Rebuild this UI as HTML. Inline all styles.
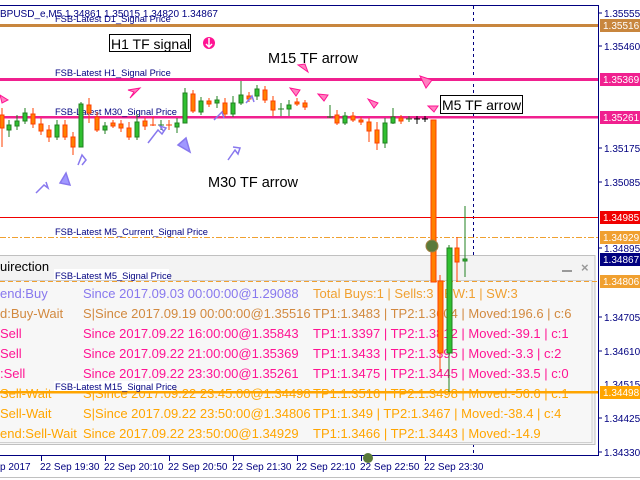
<!DOCTYPE html>
<html><head><meta charset="utf-8"><style>
html,body{margin:0;padding:0;background:#fff;width:640px;height:480px;overflow:hidden}
svg{display:block}
text{font-family:"Liberation Sans",sans-serif}
.ax{font-size:10px;fill:#000080}
.lb{font-size:9.3px;fill:#000080}
.pt{font-size:13px}
</style></head><body>
<svg width="640" height="480" viewBox="0 0 640 480" xmlns="http://www.w3.org/2000/svg">
<line x1="0" y1="5.5" x2="598" y2="5.5" stroke="#000080"/>
<line x1="598.5" y1="5" x2="598.5" y2="456" stroke="#000080"/>
<line x1="0" y1="455.5" x2="598" y2="455.5" stroke="#000080"/>
<line x1="473.5" y1="6" x2="473.5" y2="455" stroke="#000080" stroke-dasharray="3,3"/>

<rect x="-1" y="255.5" width="596" height="189" fill="#f3f3f3" stroke="#c0c0c0"/>
<rect x="-1" y="280.5" width="593" height="162" fill="#f7f7f7" stroke="#d0d0d0"/>
<text x="0" y="271" class="pt" fill="#000">uirection</text>
<line x1="562" y1="271" x2="572" y2="271" stroke="#999" stroke-width="2"/>
<text x="581" y="272" font-size="13" fill="#999" font-weight="bold">×</text>
<g class="pt" font-size="12.5">
<text x="0" y="298" fill="#8878ee">end:Buy</text>
<text x="83" y="298" fill="#8878ee">Since 2017.09.03 00:00:00@1.29088</text>
<text x="313" y="298" fill="#f0a030">Total Buys:1  | Sells:3  | BW:1  | SW:3</text>
<text x="0" y="318" fill="#d2893f">d:Buy-Wait</text>
<text x="83" y="318" fill="#d2893f">S|Since 2017.09.19 00:00:00@1.35516</text>
<text x="313" y="318" fill="#d2893f">TP1:1.3483 | TP2:1.3604 | Moved:196.6 | c:6</text>
<text x="0" y="338" fill="#ff1493">Sell</text>
<text x="83" y="338" fill="#ff1493">Since 2017.09.22 16:00:00@1.35843</text>
<text x="313" y="338" fill="#ff1493">TP1:1.3397 | TP2:1.3812 | Moved:-39.1 | c:1</text>
<text x="0" y="358" fill="#ff1493">Sell</text>
<text x="83" y="358" fill="#ff1493">Since 2017.09.22 21:00:00@1.35369</text>
<text x="313" y="358" fill="#ff1493">TP1:1.3433 | TP2:1.3395 | Moved:-3.3 | c:2</text>
<text x="0" y="378" fill="#ff1493">:Sell</text>
<text x="83" y="378" fill="#ff1493">Since 2017.09.22 23:30:00@1.35261</text>
<text x="313" y="378" fill="#ff1493">TP1:1.3475 | TP2:1.3445 | Moved:-33.5 | c:0</text>
<text x="0" y="398" fill="#ffa500">Sell-Wait</text>
<text x="83" y="398" fill="#ffa500">S|Since 2017.09.22 23:45:00@1.34498</text>
<text x="313" y="398" fill="#ffa500">TP1:1.3516 | TP2:1.3498 | Moved:-56.6 | c:1</text>
<text x="0" y="418" fill="#ffa500">Sell-Wait</text>
<text x="83" y="418" fill="#ffa500">S|Since 2017.09.22 23:50:00@1.34806</text>
<text x="313" y="418" fill="#ffa500">TP1:1.349 | TP2:1.3467 | Moved:-38.4 | c:4</text>
<text x="0" y="438" fill="#ffa500">end:Sell-Wait</text>
<text x="83" y="438" fill="#ffa500">Since 2017.09.22 23:50:00@1.34929</text>
<text x="313" y="438" fill="#ffa500">TP1:1.3466 | TP2:1.3443 | Moved:-14.9</text>
</g>

<rect x="0" y="24" width="598" height="3" fill="#c8863e"/>
<rect x="0" y="78" width="598" height="3" fill="#f0208f"/>
<rect x="0" y="116" width="598" height="2.5" fill="#f0208f"/>
<line x1="0" y1="217.5" x2="598" y2="217.5" stroke="#f00000"/>
<line x1="0" y1="237.5" x2="598" y2="237.5" stroke="#f0a030" stroke-dasharray="6,2,2,2"/>
<line x1="0" y1="281.5" x2="598" y2="281.5" stroke="#f0a030" stroke-dasharray="5,3"/>
<rect x="0" y="391" width="598" height="2.5" fill="#ffa500"/>

<g class="lb">
<rect x="54" y="13" width="114" height="10" fill="#fff"/><text x="55" y="22">FSB-Latest D1_Signal Price</text>
<rect x="54" y="67" width="114" height="10" fill="#fff"/><text x="55" y="76">FSB-Latest H1_Signal Price</text>
<text x="55" y="115">FSB-Latest M30_Signal Price</text>
<rect x="54" y="225" width="150" height="11" fill="#fff"/><text x="55" y="235">FSB-Latest M5_Current_Signal Price</text>
<rect x="54" y="269" width="115" height="11" fill="#fff"/><text x="55" y="279">FSB-Latest M5_Signal Price</text>
<rect x="54" y="381" width="120" height="10" fill="#fff"/><text x="55" y="390">FSB-Latest M15_Signal Price</text>
</g>
<text x="0" y="17" class="ax" font-size="10.5">BPUSD_e,M5  1.34861 1.35015 1.34820 1.34867</text>

<g stroke-width="1">
<g fill="#ff8000" stroke="#ff4000">
<line x1="2" y1="108" x2="2" y2="147"/><rect x="0" y="115" width="4" height="13"/>
<line x1="33" y1="108" x2="33" y2="128"/><rect x="31" y="114" width="4" height="10"/>
<line x1="41" y1="118" x2="41" y2="135"/><rect x="39" y="124" width="4" height="7"/>
<line x1="49" y1="125" x2="49" y2="142"/><rect x="47" y="130" width="4" height="7"/>
<line x1="65" y1="120" x2="65" y2="140"/><rect x="63" y="125" width="4" height="12"/>
<line x1="73" y1="132" x2="73" y2="155"/><rect x="71" y="137" width="4" height="10"/>
<line x1="89" y1="98" x2="89" y2="123"/><rect x="87" y="105" width="4" height="8"/>
<line x1="97" y1="112" x2="97" y2="132"/><rect x="95" y="117" width="4" height="13"/>
<line x1="113" y1="120" x2="113" y2="128"/><rect x="111" y="123" width="4" height="3"/>
<line x1="121" y1="120" x2="121" y2="132"/><rect x="119" y="124" width="4" height="4"/>
<line x1="129" y1="122" x2="129" y2="140"/><rect x="127" y="128" width="4" height="9"/>
<line x1="145" y1="118" x2="145" y2="130"/><rect x="143" y="121" width="4" height="5"/>
<line x1="153" y1="117" x2="153" y2="126"/><line x1="150" y1="125" x2="156" y2="125"/>
<line x1="169" y1="120" x2="169" y2="130"/><line x1="166" y1="125" x2="172" y2="125"/>
<line x1="193" y1="90" x2="193" y2="113"/><rect x="191" y="94" width="4" height="17"/>
<line x1="209" y1="98" x2="209" y2="107"/><rect x="207" y="101" width="4" height="3"/>
<line x1="225" y1="98" x2="225" y2="117"/><rect x="223" y="103" width="4" height="11"/>
<line x1="249" y1="92" x2="249" y2="102"/><rect x="247" y="96" width="4" height="3"/>
<line x1="265" y1="86" x2="265" y2="103"/><rect x="263" y="90" width="4" height="10"/>
<line x1="273" y1="96" x2="273" y2="116"/><rect x="271" y="101" width="4" height="9"/>
<line x1="297" y1="98" x2="297" y2="106"/><rect x="295" y="102" width="4" height="2"/>
<line x1="305" y1="100" x2="305" y2="110"/><rect x="303" y="103" width="4" height="4"/>
<line x1="337" y1="110" x2="337" y2="125"/><rect x="335" y="115" width="4" height="8"/>
<line x1="353" y1="112" x2="353" y2="122"/><rect x="351" y="116" width="4" height="4"/>
<line x1="361" y1="117" x2="361" y2="125"/><rect x="359" y="120" width="4" height="2"/>
<line x1="369" y1="118" x2="369" y2="142"/><rect x="367" y="122" width="4" height="9"/>
<line x1="377" y1="122" x2="377" y2="150"/><rect x="375" y="130" width="4" height="13"/>
<line x1="401" y1="115" x2="401" y2="124"/><rect x="399" y="118" width="4" height="3"/>
<rect x="431" y="120" width="5" height="162"/>
<line x1="440" y1="275" x2="440" y2="372"/><rect x="438" y="281" width="5" height="72"/>
<line x1="457" y1="237" x2="457" y2="282"/><rect x="455" y="248" width="4" height="14"/>
</g>
<g fill="#30c030" stroke="#208020">
<line x1="9" y1="120" x2="9" y2="137"/><rect x="7" y="125" width="4" height="5"/>
<line x1="17" y1="115" x2="17" y2="130"/><rect x="15" y="121" width="4" height="5"/>
<line x1="25" y1="108" x2="25" y2="124"/><rect x="23" y="113" width="4" height="8"/>
<line x1="57" y1="120" x2="57" y2="140"/><rect x="55" y="125" width="4" height="12"/>
<line x1="81" y1="102" x2="81" y2="147"/><rect x="79" y="104" width="4" height="43"/>
<line x1="105" y1="122" x2="105" y2="134"/><rect x="103" y="126" width="4" height="4"/>
<line x1="137" y1="114" x2="137" y2="140"/><rect x="135" y="122" width="4" height="15"/>
<line x1="161" y1="120" x2="161" y2="130"/><line x1="158" y1="125" x2="164" y2="125"/>
<line x1="177" y1="118" x2="177" y2="133"/><rect x="175" y="123" width="4" height="4"/>
<line x1="185" y1="88" x2="185" y2="123"/><rect x="183" y="93" width="4" height="30"/>
<line x1="201" y1="97" x2="201" y2="115"/><rect x="199" y="101" width="4" height="11"/>
<line x1="217" y1="96" x2="217" y2="108"/><rect x="215" y="100" width="4" height="3"/>
<line x1="233" y1="96" x2="233" y2="117"/><rect x="231" y="103" width="4" height="11"/>
<line x1="241" y1="81" x2="241" y2="105"/><rect x="239" y="95" width="4" height="8"/>
<line x1="257" y1="85" x2="257" y2="100"/><rect x="255" y="89" width="4" height="7"/>
<line x1="281" y1="103" x2="281" y2="116"/><line x1="278" y1="109" x2="284" y2="109"/>
<line x1="289" y1="100" x2="289" y2="116"/><rect x="287" y="105" width="4" height="4"/>
<line x1="330" y1="105" x2="330" y2="118"/><line x1="327" y1="117" x2="333" y2="117"/>
<line x1="345" y1="112" x2="345" y2="125"/><rect x="343" y="116" width="4" height="7"/>
<line x1="385" y1="118" x2="385" y2="148"/><rect x="383" y="123" width="4" height="20"/>
<line x1="393" y1="108" x2="393" y2="124"/><rect x="391" y="117" width="4" height="6"/>
<line x1="409" y1="116" x2="409" y2="122"/><line x1="406" y1="119" x2="412" y2="119"/>
<line x1="449" y1="245" x2="449" y2="392"/><rect x="447" y="248" width="5" height="105"/>
<line x1="465" y1="206" x2="465" y2="277"/><rect x="463" y="259" width="4" height="2"/>
</g>
<g stroke="#000"><line x1="417" y1="116" x2="417" y2="124"/><line x1="414" y1="119" x2="420" y2="119"/><line x1="425" y1="116" x2="425" y2="122"/><line x1="422" y1="119" x2="428" y2="119"/></g>
</g>
<circle cx="432" cy="246" r="6" fill="#5a7a3a" stroke="#a08040"/>
<circle cx="368" cy="458" r="5" fill="#5a7a3a"/>

<g fill="none" stroke="#8878ee" stroke-width="1.5">
<path d="M148 143 L158 130 L162 134 L166 128 L160 126 L164 132"/>
<path d="M178 145 L186 138 L190 152 Z" fill="#a098ff"/>
<path d="M228 160 L235 150 L238 154 L240 148 L233 147"/>
<path d="M78 165 L82 155 L86 160 L82 165"/>
<path d="M36 193 L44 185 L48 188 L46 182"/>
<path d="M60 183 L66 173 L70 185 Z" fill="#a098ff"/>
<path d="M214 120 L222 112 L224 118"/>
<path d="M246 103 L252 96 L254 102"/>
</g>
<g fill="#ff80c0" stroke="#ff1493" stroke-width="1">
<path d="M140 88 L130 98 L134 92 L128 90 Z"/>
<path d="M308 72 L298 65 L305 64 Z"/>
<path d="M0 95 L8 100 L2 103 Z"/>
<path d="M290 88 L296 96 L300 90 Z"/>
<path d="M318 94 L324 101 L328 95 Z"/>
<path d="M420 76 L426 88 L432 80 Z"/>
<path d="M428 106 L434 112 L438 106 Z"/>
<path d="M368 99 L374 108 L378 103 Z"/>
</g>
<circle cx="209" cy="43" r="6" fill="#ff1493"/>
<path d="M209 38 L209 46 M206 44 L209 47 L212 44" stroke="#fff" stroke-width="1.5" fill="none"/>

<rect x="109.5" y="34.5" width="81" height="17" fill="#fff" stroke="#000"/>
<text x="111" y="49" font-size="14" fill="#000">H1 TF signal</text>
<text x="268" y="63" font-size="14.5" fill="#000">M15 TF arrow</text>
<rect x="440.5" y="95.5" width="82" height="18" fill="#fff" stroke="#000"/>
<text x="442" y="110" font-size="14" fill="#000">M5 TF arrow</text>
<text x="208" y="187" font-size="14.5" fill="#000">M30 TF arrow</text>

<g class="ax">
<g stroke="#000080"><line x1="598" y1="13" x2="602" y2="13"/><line x1="598" y1="46" x2="602" y2="46"/><line x1="598" y1="148" x2="602" y2="148"/><line x1="598" y1="182" x2="602" y2="182"/><line x1="598" y1="248" x2="602" y2="248"/><line x1="598" y1="317" x2="602" y2="317"/><line x1="598" y1="351" x2="602" y2="351"/><line x1="598" y1="418" x2="602" y2="418"/><line x1="598" y1="452" x2="602" y2="452"/></g>
<text x="604" y="17">1.35555</text>
<text x="604" y="50">1.35460</text>
<text x="604" y="152">1.35175</text>
<text x="604" y="186">1.35085</text>
<text x="604" y="252">1.34895</text>
<text x="604" y="321">1.34705</text>
<text x="604" y="355">1.34610</text>
<text x="604" y="388">1.34515</text>
<text x="604" y="422">1.34425</text>
<text x="604" y="456">1.34330</text>
</g>
<g font-size="10" fill="#fff">
<rect x="600" y="19" width="40" height="13" fill="#c8863e"/><text x="603" y="29">1.35516</text>
<rect x="600" y="73" width="40" height="13" fill="#f0208f"/><text x="603" y="83">1.35369</text>
<rect x="600" y="111" width="40" height="13" fill="#f0208f"/><text x="603" y="121">1.35261</text>
<rect x="600" y="211" width="40" height="13" fill="#f00000"/><text x="603" y="221">1.34985</text>
<rect x="600" y="231" width="40" height="13" fill="#f0a030"/><text x="603" y="241">1.34929</text>
<rect x="600" y="253" width="40" height="13" fill="#000080"/><text x="603" y="263">1.34867</text>
<rect x="600" y="275" width="40" height="13" fill="#f0a030"/><text x="603" y="285">1.34806</text>
<rect x="600" y="386" width="40" height="13" fill="#ffa500"/><text x="603" y="396">1.34498</text>
</g>

<g class="ax" fill="#000080">
<g stroke="#000080"><line x1="41.5" y1="456" x2="41.5" y2="461"/><line x1="105.5" y1="456" x2="105.5" y2="461"/><line x1="169.5" y1="456" x2="169.5" y2="461"/><line x1="233.5" y1="456" x2="233.5" y2="461"/><line x1="297.5" y1="456" x2="297.5" y2="461"/><line x1="361.5" y1="456" x2="361.5" y2="461"/><line x1="425.5" y1="456" x2="425.5" y2="461"/></g>
<text x="0" y="470">p 2017</text>
<text x="40" y="470">22 Sep 19:30</text>
<text x="104" y="470">22 Sep 20:10</text>
<text x="168" y="470">22 Sep 20:50</text>
<text x="232" y="470">22 Sep 21:30</text>
<text x="296" y="470">22 Sep 22:10</text>
<text x="360" y="470">22 Sep 22:50</text>
<text x="424" y="470">22 Sep 23:30</text>
</g>
<line x1="0" y1="477.5" x2="640" y2="477.5" stroke="#c0c0c0"/>
</svg>
</body></html>
